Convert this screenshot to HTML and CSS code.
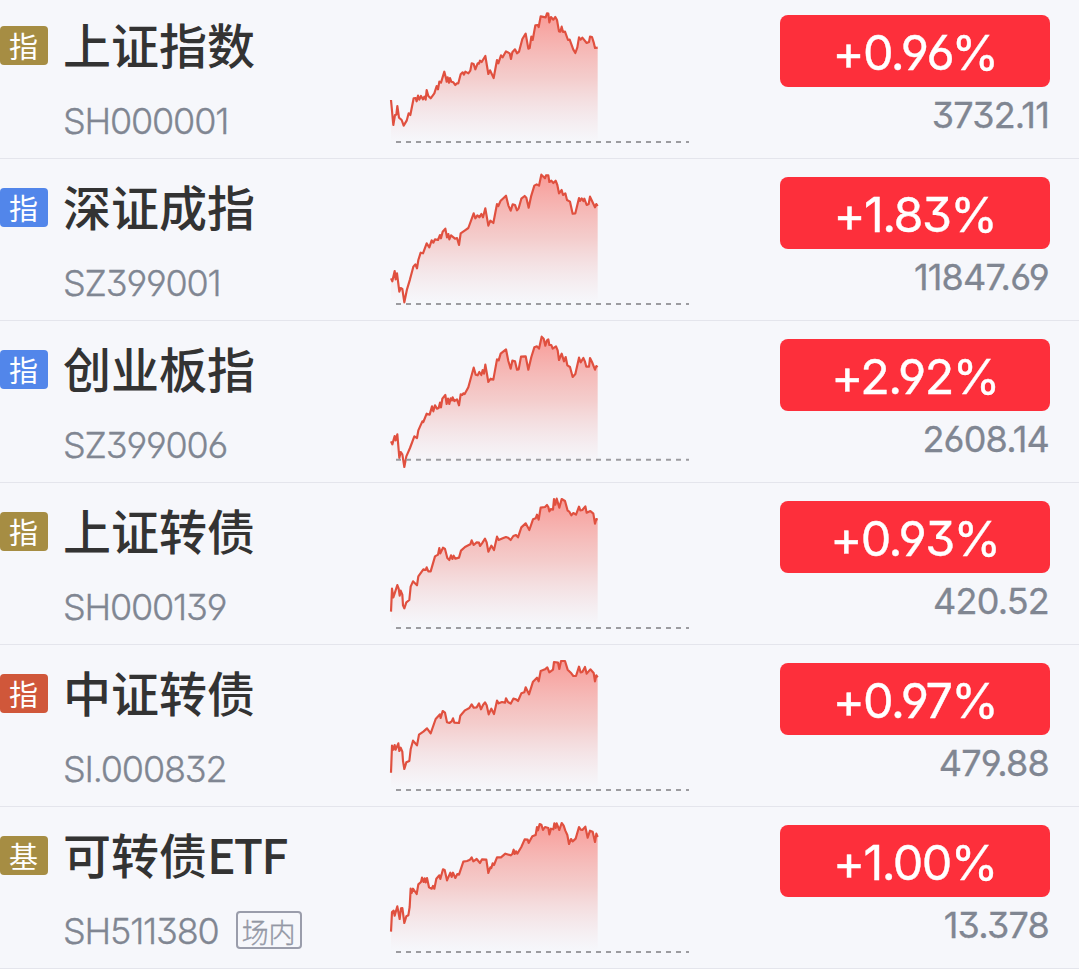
FILE: index.html
```
<!DOCTYPE html>
<html lang="zh-CN">
<head>
<title>自选</title>
<meta charset="UTF-8">
<link rel="stylesheet" href="styles.css">
<script>
  // close every line down to the floor of its chart to get the filled area
  function fillAreas() {
      for (const line of document.querySelectorAll(".line")) {
          const area = document.createElementNS("http://www.w3.org/2000/svg", "polygon");
          area.setAttribute("class", "area");
          area.setAttribute("points", `${line.getAttribute("points")} 653,428 33,428`);
          line.before(area);
      }
  }

  window.addEventListener("DOMContentLoaded", fillAreas);
</script>
</head>
<body>
  <!-- shared gradient for all the charts -->
  <svg class="defs" width="0" height="0">
    <defs>
      <linearGradient id="fade" gradientUnits="userSpaceOnUse" x1="0" y1="40" x2="0" y2="428">
        <stop offset="0" stop-color="#fb564c" stop-opacity=".58"/>
        <stop offset=".5" stop-color="#f07a70" stop-opacity=".34"/>
        <stop offset="1" stop-color="#e8a8a8" stop-opacity="0"/>
      </linearGradient>
    </defs>
  </svg>

  <div class="list">
    <div class="row">
      <span class="badge gold">指</span>
      <div class="info">
        <div class="name">上证指数</div>
        <div class="code">SH000001</div>
      </div>
      <svg class="chart" viewBox="0 -9 960 483">
        <polyline class="line" points="33,300 40,375 45,345 49,344 52,318 57,353 65,360 71,377 80,362 86,340 91,345 101,295 107,294 110,304 114,287 118,299 123,288 129,298 133,290 137,299 140,270 145,288 152,295 163,280 170,258 174,268 178,245 183,248 193,215 198,235 200,245 203,232 207,248 210,234 214,245 220,247 226,255 231,250 235,250 242,223 248,217 252,224 256,215 265,220 271,212 275,190 281,192 286,208 293,190 297,191 300,182 305,186 316,168 325,222 330,211 341,234 351,180 355,190 363,166 368,172 378,154 389,160 393,177 397,157 405,148 411,160 417,155 427,117 437,101 445,146 449,144 454,110 458,120 466,76 473,75 476,81 482,49 497,52 501,40 505,41 508,67 513,51 520,59 526,51 531,60 537,94 541,95 545,80 549,96 555,95 564,120 569,119 580,149 586,159 592,142 597,112 602,119 607,113 620,129 627,126 630,110 636,111 641,127 645,144 653,143"/>
        <path class="base" d="M48 426H927"/>
      </svg>
      <div class="quote">
        <div class="change">+0.96%</div>
        <div class="price">3732.11</div>
      </div>
    </div>

    <div class="row">
      <span class="badge blue">指</span>
      <div class="info">
        <div class="name">深证成指</div>
        <div class="code">SZ399001</div>
      </div>
      <svg class="chart" viewBox="0 -3 960 483">
        <polyline class="line" points="33,355 37,364 44,333 47,358 51,340 58,395 62,384 67,387 73,427 81,388 90,358 100,320 106,313 111,325 115,300 122,278 129,280 140,250 148,262 155,241 160,248 165,238 174,240 180,225 183,235 188,215 196,206 201,232 205,222 208,238 213,226 225,236 231,234 237,255 242,220 255,211 265,204 281,160 286,175 292,166 298,172 304,162 309,172 316,145 325,197 331,182 340,189 351,132 355,138 362,122 378,107 385,136 392,152 398,133 405,135 411,151 416,145 424,116 434,108 439,113 446,143 453,110 463,77 470,73 477,77 484,44 495,55 498,46 505,46 508,66 514,62 520,69 527,62 532,75 537,100 545,90 549,105 556,100 561,120 570,125 578,161 586,160 597,114 600,123 605,115 610,123 613,116 620,135 626,132 630,110 645,142 649,132 653,138"/>
        <path class="base" d="M48 432H927"/>
      </svg>
      <div class="quote">
        <div class="change">+1.83%</div>
        <div class="price">11847.69</div>
      </div>
    </div>

    <div class="row">
      <span class="badge blue">指</span>
      <div class="info">
        <div class="name">创业板指</div>
        <div class="code">SZ399006</div>
      </div>
      <svg class="chart" viewBox="0 -3 960 483">
        <polyline class="line" points="33,358 37,367 44,342 47,355 52,337 58,408 62,390 67,397 73,435 79,403 90,378 103,343 111,348 115,325 127,298 130,300 140,275 149,278 156,253 160,268 165,250 171,260 176,258 180,242 183,256 187,230 196,219 200,246 204,230 208,246 212,229 216,235 218,226 223,237 231,232 237,250 242,217 247,219 250,214 254,216 265,196 281,137 287,158 293,160 298,150 304,159 308,144 312,155 316,128 325,180 332,170 340,173 351,112 356,115 362,95 378,82 385,117 392,140 397,116 405,118 411,143 416,142 423,104 437,103 445,143 454,105 463,76 471,73 477,80 485,44 491,50 496,71 501,55 505,52 508,69 514,69 518,80 528,73 533,85 537,114 545,95 552,118 557,105 562,130 570,135 578,165 586,156 597,107 602,121 610,108 615,119 619,134 627,134 630,108 636,120 645,143 649,132 653,135"/>
        <path class="base" d="M48 413H927"/>
      </svg>
      <div class="quote">
        <div class="change">+2.92%</div>
        <div class="price">2608.14</div>
      </div>
    </div>

    <div class="row">
      <span class="badge gold">指</span>
      <div class="info">
        <div class="name">上证转债</div>
        <div class="code">SH000139</div>
      </div>
      <svg class="chart" viewBox="0 -3 960 483">
        <polyline class="line" points="33,383 36,314 40,340 45,325 52,303 56,314 59,335 62,320 67,332 69,364 73,373 79,355 88,348 92,308 99,292 104,297 111,304 115,277 130,256 137,258 140,250 145,262 152,262 165,217 174,212 178,192 181,208 189,191 195,195 202,222 208,228 213,214 217,225 221,215 226,224 237,221 243,200 255,189 265,184 271,181 275,169 281,183 290,175 297,176 300,186 306,178 315,164 320,175 325,203 334,185 342,198 351,158 356,168 370,162 378,159 384,161 392,168 400,156 408,153 414,160 424,130 437,118 448,138 459,106 467,103 471,92 476,107 482,71 495,69 501,63 505,69 508,82 513,75 519,77 522,45 526,62 530,44 538,71 545,45 555,51 563,80 568,83 574,94 580,87 588,92 597,68 601,79 607,78 616,67 620,86 631,81 640,89 645,119 649,105 653,107"/>
        <path class="base" d="M48 432H927"/>
      </svg>
      <div class="quote">
        <div class="change">+0.93%</div>
        <div class="price">420.52</div>
      </div>
    </div>

    <div class="row">
      <span class="badge red">指</span>
      <div class="info">
        <div class="name">中证转债</div>
        <div class="code">SI.000832</div>
      </div>
      <svg class="chart" viewBox="0 -3 960 483">
        <polyline class="line" points="33,380 36,299 40,311 44,297 47,311 55,292 58,315 62,305 67,317 69,345 73,369 79,349 88,345 92,310 99,284 105,291 111,298 117,266 130,257 141,247 152,262 167,219 180,205 182,216 188,195 195,200 201,229 208,231 215,226 219,217 223,230 237,231 241,209 255,193 268,186 275,175 281,185 290,184 297,172 303,190 309,177 315,169 320,178 326,205 334,188 342,204 351,164 356,172 366,168 375,170 378,157 384,168 392,173 400,158 408,160 414,165 424,142 433,139 437,124 447,145 459,107 471,95 476,106 482,75 495,70 502,64 508,79 519,71 522,48 534,50 538,69 543,45 555,45 563,71 574,82 580,90 588,90 597,62 602,79 607,78 615,63 620,83 631,70 641,81 645,106 649,88 653,94"/>
        <path class="base" d="M48 432H927"/>
      </svg>
      <div class="quote">
        <div class="change">+0.97%</div>
        <div class="price">479.88</div>
      </div>
    </div>

    <div class="row">
      <span class="badge gold">基</span>
      <div class="info">
        <div class="name">可转债<span class="latin">ETF</span></div>
        <div class="code">SH511380<span class="tag">场内</span></div>
      </div>
      <svg class="chart" viewBox="0 -3 960 483">
        <polyline class="line" points="33,371 36,312 41,308 44,323 52,295 59,333 63,301 67,300 73,345 79,325 85,322 89,297 92,242 95,255 99,242 110,258 115,229 123,222 126,209 131,222 134,211 137,223 141,210 147,238 155,242 159,234 163,242 169,212 178,202 181,213 189,184 194,186 201,217 211,194 215,207 219,194 226,210 232,198 237,200 250,161 261,159 270,155 275,148 280,160 290,153 300,165 306,154 319,155 325,195 331,178 334,180 338,166 342,171 351,148 363,148 376,137 392,142 397,138 401,125 404,138 408,130 412,137 424,117 434,94 443,95 446,105 457,85 467,81 471,57 474,67 479,48 484,50 489,66 495,57 505,60 508,79 513,62 520,64 523,46 527,60 530,46 538,66 545,45 551,53 556,68 562,81 567,108 573,93 578,100 587,92 597,57 602,65 607,66 616,56 623,89 630,68 638,71 645,102 649,77 653,87"/>
        <path class="base" d="M48 432H927"/>
      </svg>
      <div class="quote">
        <div class="change">+1.00%</div>
        <div class="price">13.378</div>
      </div>
    </div>
  </div>
</body>
</html>
```
FILE: styles.css
```
* {
    box-sizing: border-box;
}
body {
    margin: 0;
    height: 969px;
    overflow: hidden;
    color: #333333;
    background-color: #f6f7fb;
    font-family: Inter, "Noto Sans CJK SC", sans-serif;
    font-feature-settings: "cv03", "cv04", "cv09";
}
.defs {
    display: block;
}
.list {
    margin-top: -3px;
}
.row {
    display: flex;
    align-items: flex-start;
    height: 162px;
    padding-right: 29px;
    border-bottom: 1px solid #e4e5ec;
}
.badge {
    width: 48px;
    height: 39px;
    margin-top: 29px;
    padding-right: 1px;
    border-radius: 4px;
    color: #ffffff;
    font-family: "Noto Sans CJK SC", sans-serif;
    font-size: 29px;
    line-height: 38px;
    text-align: center;
}
.gold {
    background-color: #a68d43;
}
.blue {
    background-color: #5286ea;
}
.red {
    background-color: #d0573a;
}
.info {
    width: 317px;
    margin-left: 15px;
    padding-top: 14px;
}
.name {
    height: 64px;
    font-family: "Noto Sans CJK SC", sans-serif;
    font-size: 48px;
    font-weight: 500;
    line-height: 64px;
    white-space: nowrap;
}
.latin {
    letter-spacing: -2px;
}
.code {
    display: flex;
    align-items: center;
    height: 40px;
    margin-top: 26px;
    color: #808692;
    font-size: 36px;
    font-weight: 300;
    letter-spacing: -1.2px;
    line-height: 40px;
    -webkit-text-stroke: 0.3px #808692;
}
.tag {
    width: 66px;
    height: 38px;
    margin: -2px 0 0 17px;
    border: 2px solid #9a9dab;
    border-radius: 4px;
    color: #9a9dab;
    font-family: "Noto Sans CJK SC", sans-serif;
    font-size: 27px;
    letter-spacing: 0;
    line-height: 37px;
    text-align: center;
}
.chart {
    width: 320px;
    height: 161px;
}
.area {
    fill: url(#fade);
}
.line {
    fill: none;
    stroke: #e0503f;
    stroke-width: 6.5;
    stroke-linejoin: round;
}
.base {
    fill: none;
    stroke: #9c9ca0;
    stroke-width: 6;
    stroke-dasharray: 15 15;
}
.quote {
    width: 270px;
    margin-left: auto;
    padding-top: 18px;
}
.change {
    height: 72px;
    border-radius: 8px;
    color: #ffffff;
    background-color: #fd2f3b;
    font-size: 48.5px;
    letter-spacing: -1.6px;
    line-height: 75px;
    text-align: center;
    -webkit-text-stroke: 0.4px #ffffff;
}
.price {
    margin-top: 8px;
    padding-right: 1px;
    color: #808692;
    font-size: 36px;
    letter-spacing: -0.8px;
    line-height: 40px;
    text-align: right;
    -webkit-text-stroke: 0.3px #808692;
}
```
